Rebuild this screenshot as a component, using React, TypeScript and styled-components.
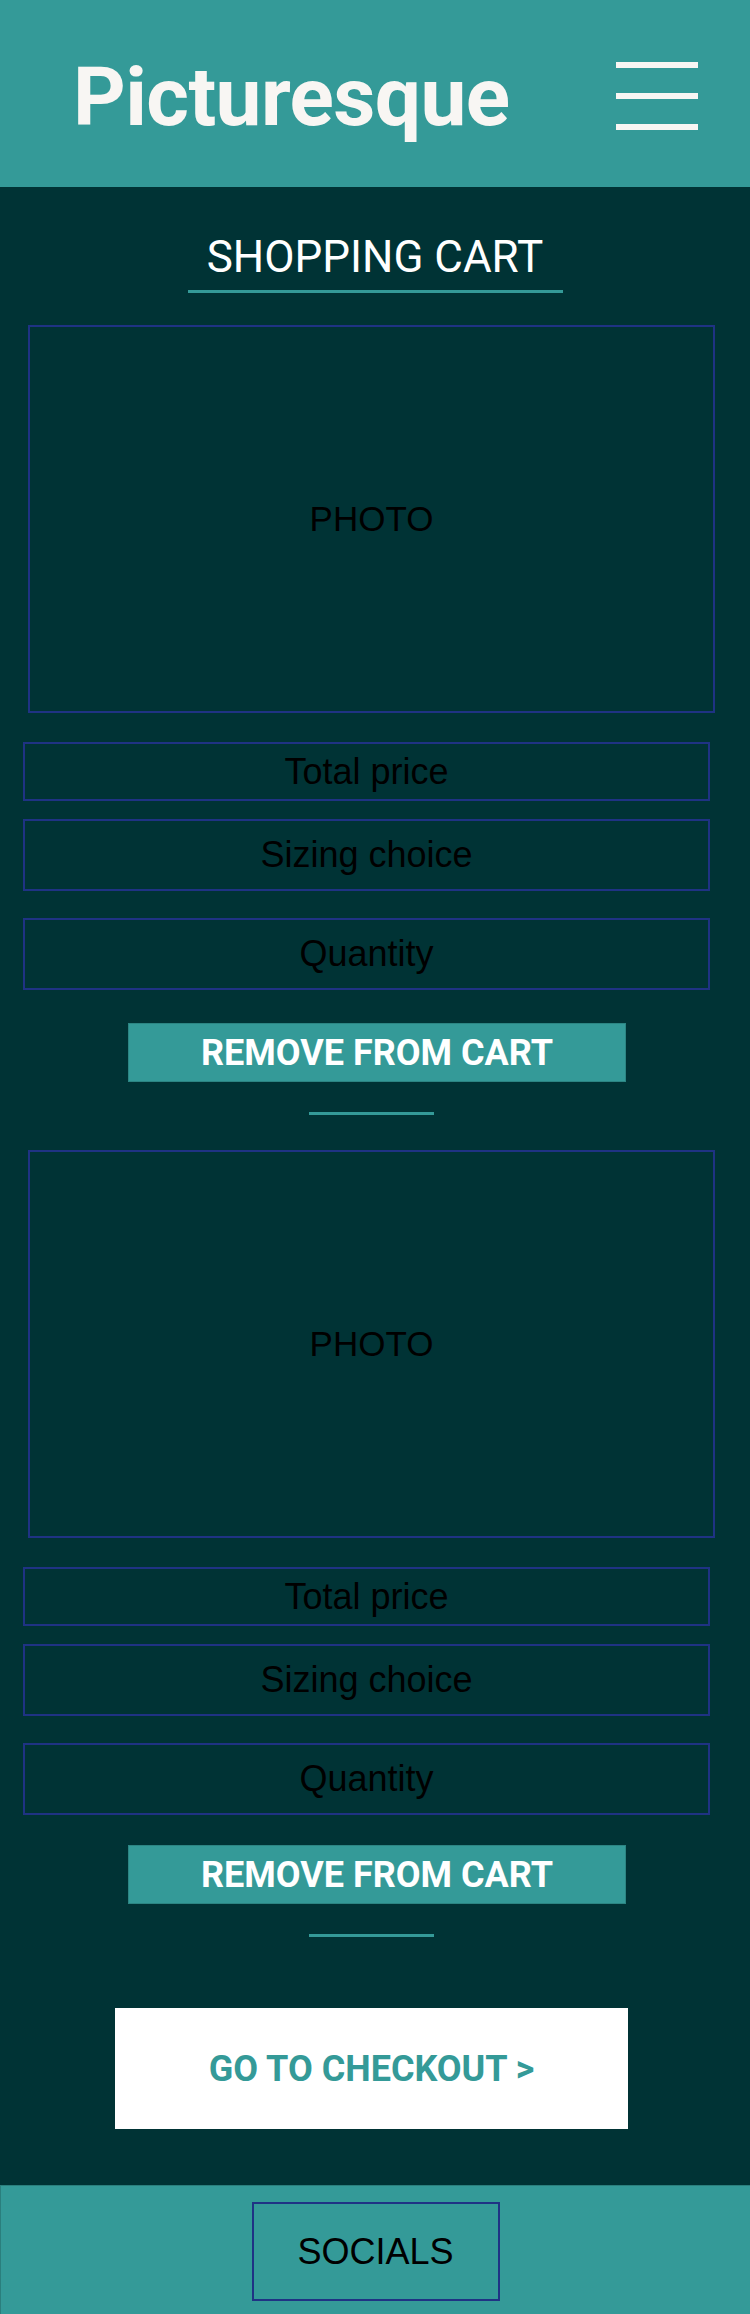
import styled, { createGlobalStyle } from 'styled-components';

const GlobalStyle = createGlobalStyle`
  body {
    margin: 0;
    background: #003335;
    font-family: 'Liberation Sans', Arial, sans-serif;
  }
`;

const Page = styled.div`
  width: 750px;
  min-height: 2314px;
  display: flex;
  flex-direction: column;
  background: #003335;
`;

const Header = styled.header`
  height: 187px;
  box-sizing: border-box;
  background: #349a98;
  display: flex;
  align-items: center;
  justify-content: space-between;
  padding: 0 52px 0 73px;
`;

const Logo = styled.div`
  font-family: Roboto, 'Noto Sans', sans-serif;
  font-size: 82px;
  font-weight: 700;
  line-height: 1;
  color: #f8f6f3;
  letter-spacing: -0.6px;
  margin-top: 6px;
`;

const Burger = styled.div`
  width: 82px;
  display: flex;
  flex-direction: column;
  gap: 25px;
  margin-top: 4px;

  span {
    display: block;
    height: 6px;
    background: #f8f6f3;
  }
`;

const Main = styled.main`
  flex: 1;
  display: flex;
  flex-direction: column;
`;

const PageTitle = styled.h1`
  width: 375px;
  margin: 48px auto 0;
  padding-bottom: 11px;
  border-bottom: 3px solid #349a98;
  font-family: Roboto, 'Noto Sans', sans-serif;
  font-size: 44px;
  font-weight: 400;
  line-height: 1;
  color: #ffffff;
  text-align: center;
`;

const Item = styled.section<{ $first?: boolean }>`
  display: flex;
  flex-direction: column;
  margin-top: ${({ $first }) => ($first ? '32px' : '35px')};
`;

const Photo = styled.div`
  box-sizing: border-box;
  width: 687px;
  height: 388px;
  margin-left: 28px;
  border: 2px solid #1f3384;
  display: flex;
  align-items: center;
  justify-content: center;
  font-size: 35px;
  color: #000;
`;

const Field = styled.div<{ $height: number; $gap: number }>`
  box-sizing: border-box;
  width: 687px;
  height: ${({ $height }) => $height}px;
  margin: ${({ $gap }) => $gap}px 0 0 23px;
  border: 2px solid #1f3384;
  display: flex;
  align-items: center;
  justify-content: center;
  font-size: 36px;
  color: #000;
`;

const RemoveButton = styled.button<{ $gap: number }>`
  box-sizing: border-box;
  width: 498px;
  height: 59px;
  margin: ${({ $gap }) => $gap}px 0 0 128px;
  padding: 0;
  background: #349a98;
  border: 1px solid #2c8583;
  color: #ffffff;
  font-family: Roboto, 'Noto Sans', sans-serif;
  font-size: 36px;
  font-weight: 700;
  cursor: pointer;
`;

const Divider = styled.div`
  width: 125px;
  height: 3px;
  margin: 30px 0 0 309px;
  background: #349a98;
`;

const CheckoutButton = styled.button`
  box-sizing: border-box;
  width: 513px;
  height: 121px;
  margin: 71px 0 0 115px;
  padding: 0;
  background: #ffffff;
  border: none;
  color: #349a98;
  font-family: Roboto, 'Noto Sans', sans-serif;
  font-size: 36px;
  font-weight: 700;
  cursor: pointer;
`;

const Footer = styled.footer`
  box-sizing: border-box;
  height: 129px;
  margin-top: 56px;
  background: #349a98;
  border-top: 1px solid #2a7f7d;
  border-left: 1px solid #2a7f7d;
  display: flex;
  justify-content: center;
  padding-top: 16px;
`;

const Socials = styled.div`
  box-sizing: border-box;
  width: 248px;
  height: 99px;
  border: 2px solid #1f3384;
  display: flex;
  align-items: center;
  justify-content: center;
  font-size: 36px;
  color: #000;
`;

const items = [
  { id: 1, buttonGap: 33 },
  { id: 2, buttonGap: 30 },
];

export default function App() {
  return (
    <Page>
      <GlobalStyle />
      <Header>
        <Logo>Picturesque</Logo>
        <Burger>
          <span />
          <span />
          <span />
        </Burger>
      </Header>
      <Main>
        <PageTitle>SHOPPING CART</PageTitle>
        {items.map((item, i) => (
          <Item key={item.id} $first={i === 0}>
            <Photo>PHOTO</Photo>
            <Field $height={59} $gap={29}>Total price</Field>
            <Field $height={72} $gap={18}>Sizing choice</Field>
            <Field $height={72} $gap={27}>Quantity</Field>
            <RemoveButton $gap={item.buttonGap}>REMOVE FROM CART</RemoveButton>
            <Divider />
          </Item>
        ))}
        <CheckoutButton>GO TO CHECKOUT &gt;</CheckoutButton>
      </Main>
      <Footer>
        <Socials>SOCIALS</Socials>
      </Footer>
    </Page>
  );
}
